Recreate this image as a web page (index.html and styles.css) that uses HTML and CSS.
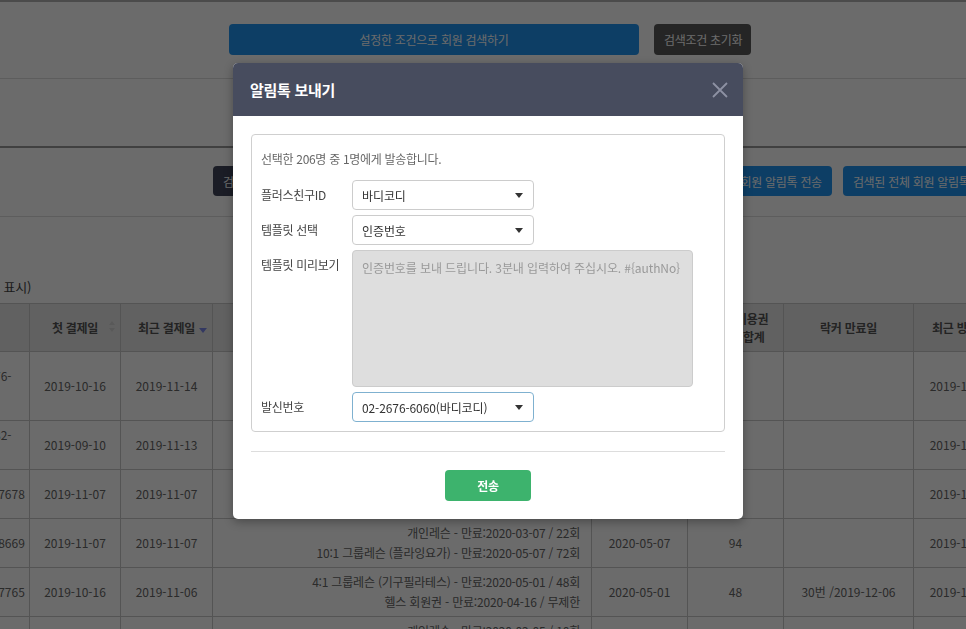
FILE: index.html
```html
<!DOCTYPE html>
<html lang="ko">
<head>
    <meta charset="UTF-8">
    <meta name="viewport" content="width=device-width, initial-scale=1.0">
    <title>회원 검색</title>
    <link rel="stylesheet" href="styles.css">
</head>
<body>

<div class="page">
    <div class="search-area">
        <button class="btn btn-blue btn-search">설정한 조건으로 회원 검색하기</button>
        <button class="btn btn-dark btn-reset">검색조건 초기화</button>
    </div>

    <div class="filter-summary"></div>

    <div class="action-bar">
        <button class="btn btn-navy btn-excel">검색결과 엑셀 다운로드</button>
        <button class="btn btn-blue">선택한 회원 알림톡 전송</button>
        <button class="btn btn-blue">검색된 전체 회원 알림톡 전송</button>
    </div>

    <div class="list-area" id="memberList">
        <div class="list-count">총 206명 (10명씩 표시)</div>
        <table class="member-table">
            <colgroup>
                <col style="width: 80px">
                <col style="width: 91px">
                <col style="width: 91px">
                <col style="width: 92px">
                <col style="width: 379px">
                <col style="width: 96px">
                <col style="width: 96px">
                <col style="width: 130px">
                <col style="width: 94px">
                <col style="width: 100px">
            </colgroup>
            <thead>
                <tr>
                    <th>회원명</th>
                    <th>연락처</th>
                    <th>첫 결제일
                        <svg class="sort-icon sort-both" width="6" height="11" viewBox="0 0 6 11"><polygon points="3,0 6,4 0,4"/><polygon points="0,7 6,7 3,11"/></svg>
                    </th>
                    <th>최근 결제일
                        <svg class="sort-icon sort-desc" width="8" height="5" viewBox="0 0 8 5"><polygon points="0,0 8,0 4,5"/></svg>
                    </th>
                    <th>보유 이용권</th>
                    <th>만료일</th>
                    <th class="th-shift">잔여이용권<br>횟수 합계</th>
                    <th>락커 만료일</th>
                    <th>최근 방문일</th>
                    <th>등록일</th>
                </tr>
            </thead>
            <tbody>
                <tr>
                    <td>김지은</td>
                    <td class="phone">010-3376-<br>2281</td>
                    <td>2019-10-16</td>
                    <td>2019-11-14</td>
                    <td class="products">개인레슨 - 만료:2020-01-14 / 10회<br>헬스 회원권 - 만료:2020-02-14 / 무제한<br>운동복 - 만료:2020-02-14 / 무제한</td>
                    <td>2020-02-14</td>
                    <td>10</td>
                    <td></td>
                    <td>2019-11-14</td>
                    <td>2019-10-16</td>
                </tr>
                <tr>
                    <td>이수진</td>
                    <td class="phone">031-8682-<br>4410</td>
                    <td>2019-09-10</td>
                    <td>2019-11-13</td>
                    <td class="products">8:1 그룹레슨 (요가) - 만료:2020-02-13 / 24회<br>헬스 회원권 - 만료:2020-02-13 / 무제한</td>
                    <td>2020-02-13</td>
                    <td>24</td>
                    <td></td>
                    <td>2019-11-13</td>
                    <td>2019-09-10</td>
                </tr>
                <tr>
                    <td>박민호</td>
                    <td class="phone">010-5512-7678</td>
                    <td>2019-11-07</td>
                    <td>2019-11-07</td>
                    <td class="products">개인레슨 - 만료:2020-02-07 / 20회<br>헬스 회원권 - 만료:2020-02-07 / 무제한</td>
                    <td>2020-02-07</td>
                    <td>20</td>
                    <td></td>
                    <td>2019-11-12</td>
                    <td>2019-11-07</td>
                </tr>
                <tr>
                    <td>최유리</td>
                    <td class="phone">010-2234-8669</td>
                    <td>2019-11-07</td>
                    <td>2019-11-07</td>
                    <td class="products">개인레슨 - 만료:2020-03-07 / 22회<br>10:1 그룹레슨 (플라잉요가) - 만료:2020-05-07 / 72회</td>
                    <td>2020-05-07</td>
                    <td>94</td>
                    <td></td>
                    <td>2019-11-11</td>
                    <td>2019-11-07</td>
                </tr>
                <tr>
                    <td>정하늘</td>
                    <td class="phone">010-4410-7765</td>
                    <td>2019-10-16</td>
                    <td>2019-11-06</td>
                    <td class="products">4:1 그룹레슨 (기구필라테스) - 만료:2020-05-01 / 48회<br>헬스 회원권 - 만료:2020-04-16 / 무제한</td>
                    <td>2020-05-01</td>
                    <td>48</td>
                    <td>30번 /2019-12-06</td>
                    <td>2019-11-10</td>
                    <td>2019-10-16</td>
                </tr>
                <tr>
                    <td>한지민</td>
                    <td class="phone">010-9120-3345</td>
                    <td>2019-10-02</td>
                    <td>2019-11-05</td>
                    <td class="products">개인레슨 - 만료:2020-02-05 / 10회<br>헬스 회원권 - 만료:2020-02-05 / 무제한</td>
                    <td>2020-02-05</td>
                    <td>10</td>
                    <td></td>
                    <td>2019-11-09</td>
                    <td>2019-10-02</td>
                </tr>
            </tbody>
        </table>
    </div>
</div>

<div class="dim"></div>

<div class="modal">
    <div class="modal-header">
        <h2 class="modal-title">알림톡 보내기</h2>
        <button class="modal-close" type="button">
            <svg width="16" height="16" viewBox="0 0 16 16"><path d="M1 1 L15 15 M15 1 L1 15"/></svg>
        </button>
    </div>
    <div class="modal-body">
        <div class="send-box">
            <p class="send-info">선택한 206명 중 1명에게 발송합니다.</p>
            <div class="form-grid">
                <label for="plusFriend">플러스친구ID</label>
                <div class="select-wrap">
                    <select id="plusFriend"><option>바디코디</option></select>
                    <svg class="select-arrow" width="8" height="5" viewBox="0 0 8 5"><polygon points="0,0 8,0 4,5"/></svg>
                </div>

                <label for="template">템플릿 선택</label>
                <div class="select-wrap">
                    <select id="template"><option>인증번호</option></select>
                    <svg class="select-arrow" width="8" height="5" viewBox="0 0 8 5"><polygon points="0,0 8,0 4,5"/></svg>
                </div>

                <label for="templatePreview">템플릿 미리보기</label>
                <textarea id="templatePreview" readonly>인증번호를 보내 드립니다. 3분내 입력하여 주십시오. #{authNo}</textarea>

                <label for="sender">발신번호</label>
                <div class="select-wrap">
                    <select id="sender" class="is-focus"><option>02-2676-6060(바디코디)</option></select>
                    <svg class="select-arrow" width="8" height="5" viewBox="0 0 8 5"><polygon points="0,0 8,0 4,5"/></svg>
                </div>
            </div>
        </div>
        <hr class="modal-line">
        <div class="modal-footer">
            <button class="btn-send" type="button">전송</button>
        </div>
    </div>
</div>

<script>
    // 회원 목록은 가로로 넓어서 스크롤된 상태로 보여준다
    document.getElementById('memberList').scrollLeft = 142;
</script>

</body>
</html>
```

FILE: styles.css
```css
* {
    box-sizing: border-box;
}
html, body {
    overflow: hidden;
}
body {
    margin: 0;
    font-family: "Noto Sans CJK KR", "Noto Sans", sans-serif;
    font-size: 12px;
    color: #555;
    background: #fff;
    letter-spacing: -0.3px;
}
button, select, textarea {
    font-family: inherit;
    letter-spacing: inherit;
}

.page {
    min-width: 1004px;
}

/* search buttons */
.search-area {
    display: flex;
    gap: 15px;
    padding: 22px 0 23px 229px;
    border-top: 2px solid #b4b4b4;
    border-bottom: 1px solid #ddd;
}
.btn {
    flex-shrink: 0;
    height: 30px;
    padding: 0 10px;
    border: 0;
    border-radius: 4px;
    color: #fff;
    font-size: 12px;
    white-space: nowrap;
}
.btn-blue {
    background: #2094f0;
}
.btn-dark {
    background: #585858;
}
.btn-navy {
    background: #40465c;
}
.btn-search {
    width: 410px;
    height: 31px;
}
.btn-reset {
    width: 97px;
    height: 31px;
}

.filter-summary {
    height: 69px;
    border-bottom: 2px solid #999;
}

.action-bar {
    display: flex;
    gap: 11px;
    padding: 18px 0 20px 213px;
    border-bottom: 1px solid #ddd;
}
.btn-excel {
    margin-right: auto;
}

/* member list */
.list-area {
    overflow: hidden;
    padding-top: 60px;
}
.list-count {
    width: 173px;
    margin-bottom: 6px;
    text-align: right;
    font-size: 13px;
    line-height: 20px;
    color: #444;
    white-space: nowrap;
}
.member-table {
    width: 1249px;
    table-layout: fixed;
    border-collapse: collapse;
}
.member-table th, .member-table td {
    border: 1px solid #c8c8c8;
    text-align: center;
}
.member-table th {
    position: relative;
    height: 48px;
    padding: 5px 6px;
    line-height: 18px;
    background: #e8e8e8;
    color: #555;
    font-weight: bold;
}
.member-table th.th-shift {
    padding-left: 18px;
}
.member-table td {
    padding: 4px 6px;
    line-height: 20px;
    color: #666;
    letter-spacing: 0;
}
.member-table td.phone {
    padding: 4px 2px;
}
.member-table td.products {
    text-align: right;
    padding-right: 11px;
    letter-spacing: -0.2px;
}
.sort-icon {
    position: absolute;
    right: 5px;
}
.sort-both {
    top: 17px;
    fill: #d4d4d4;
}
.sort-desc {
    top: 24px;
    fill: #7a86e8;
}

/* modal */
.dim {
    position: fixed;
    top: 0;
    right: 0;
    bottom: 0;
    left: 0;
    background: rgba(0, 0, 0, 0.58);
}
.modal {
    position: fixed;
    top: 63px;
    left: 50%;
    width: 510px;
    margin-left: -250px;
    border-radius: 5px;
    overflow: hidden;
    background: #fff;
    box-shadow: 0 3px 10px rgba(0, 0, 0, 0.3);
}
.modal-header {
    display: flex;
    align-items: center;
    justify-content: space-between;
    height: 53px;
    padding: 0 15px 0 17px;
    background: #474c5e;
}
.modal-title {
    margin: 0;
    font-size: 15px;
    font-weight: bold;
    color: #fff;
}
.modal-close {
    display: flex;
    padding: 0;
    border: 0;
    background: none;
}
.modal-close svg {
    stroke: #8d91a3;
    stroke-width: 1.8;
}
.modal-body {
    padding: 18px;
}
.send-box {
    padding: 14px 9px 9px;
    border: 1px solid #cfcfcf;
    border-radius: 4px;
}
.send-info {
    margin: 0 0 11px;
    line-height: 20px;
    color: #666;
}
.form-grid {
    display: grid;
    grid-template-columns: 91px 1fr;
    row-gap: 5px;
    align-items: start;
}
.form-grid label {
    line-height: 30px;
    color: #444;
}
.select-wrap {
    position: relative;
    width: 182px;
}
.select-wrap select {
    appearance: none;
    -webkit-appearance: none;
    display: block;
    width: 100%;
    height: 30px;
    padding: 0 24px 0 9px;
    border: 1px solid #ccc;
    border-radius: 4px;
    background: #fff;
    font-size: 12px;
    letter-spacing: -0.1px;
    color: #333;
    outline: none;
}
.select-wrap select.is-focus {
    border-color: #7fb1d0;
}
.select-arrow {
    position: absolute;
    right: 11px;
    top: 13px;
    fill: #333;
    pointer-events: none;
}
.form-grid textarea {
    display: block;
    width: 341px;
    height: 137px;
    padding: 7px 9px;
    border: 1px solid #ccc;
    border-radius: 4px;
    background: #dedede;
    font-size: 12px;
    line-height: 20px;
    letter-spacing: -0.1px;
    color: #999;
    resize: none;
    outline: none;
}
.modal-line {
    margin: 19px 0 18px;
    border: 0;
    border-top: 1px solid #ddd;
}
.modal-footer {
    display: flex;
    justify-content: center;
}
.btn-send {
    width: 86px;
    height: 31px;
    border: 0;
    border-radius: 4px;
    background: #3db36d;
    color: #fff;
    font-size: 12px;
    font-weight: bold;
}
```
